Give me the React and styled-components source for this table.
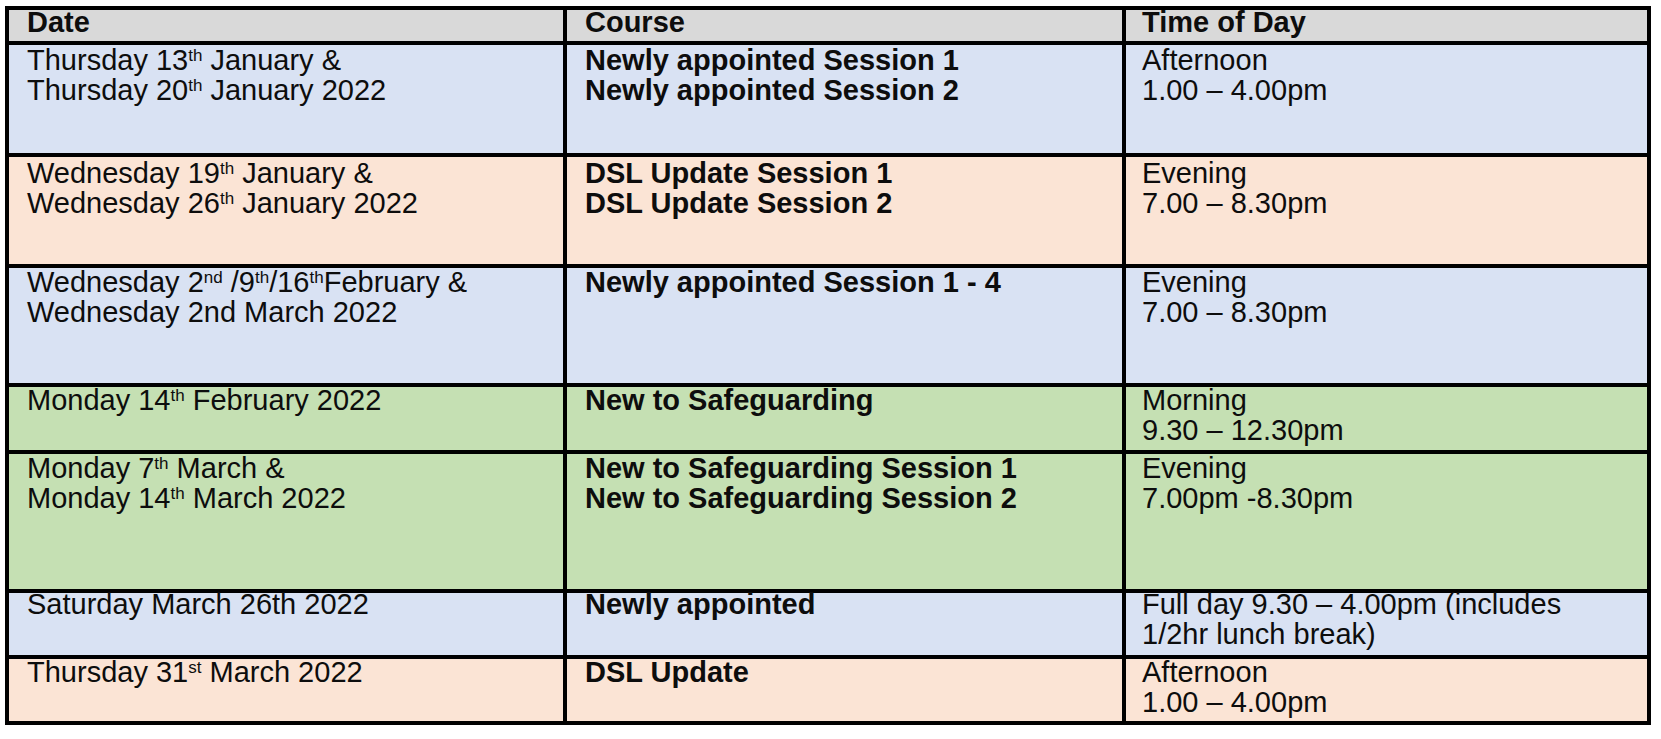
import styled, { createGlobalStyle } from "styled-components"

const GlobalStyle = createGlobalStyle`
  body {
    margin: 0;
    background: #ffffff;
    font-family: "Liberation Sans", Arial, sans-serif;
  }
`

const Page = styled.div`
  padding: 6px 0 0 5px;
`

const Table = styled.div`
  display: inline-grid;
  grid-template-columns: 554px 555px 521px;
  gap: 4px;
  padding: 4px;
  background-color: #000;
`

const Cell = styled.div`
  background-color: ${(p) => p.$bg};
  padding-left: ${(p) => (p.$last ? 16 : 18)}px;
  font-size: 29px;
  line-height: 30px;
  font-weight: ${(p) => (p.$bold ? 700 : 400)};
  color: #0d0d0d;
  white-space: nowrap;
  overflow: visible;

  & > :first-child {
    margin-top: ${(p) => p.$nudge || 0}px;
  }
`

const Line = styled.div``

const Sup = styled.sup`
  font-size: 17px;
  line-height: 0;
  vertical-align: 9px;
`

const colors = {
  header: "#d9d9d9",
  blue: "#d9e2f3",
  peach: "#fbe4d5",
  green: "#c5e0b3",
}

const rows = [
  {
    bg: colors.blue,
    height: 108,
    nudge: 0,
    date: [
      <>Thursday 13<Sup>th</Sup> January &amp;</>,
      <>Thursday 20<Sup>th</Sup> January 2022</>,
    ],
    course: ["Newly appointed Session 1", "Newly appointed Session 2"],
    time: ["Afternoon", "1.00 – 4.00pm"],
  },
  {
    bg: colors.peach,
    height: 107,
    nudge: 1,
    date: [
      <>Wednesday 19<Sup>th</Sup> January &amp;</>,
      <>Wednesday 26<Sup>th</Sup> January 2022</>,
    ],
    course: ["DSL Update Session 1", "DSL Update Session 2"],
    time: ["Evening", "7.00 – 8.30pm"],
  },
  {
    bg: colors.blue,
    height: 115,
    nudge: -1,
    date: [
      <>Wednesday 2<Sup>nd</Sup> /9<Sup>th</Sup>/16<Sup>th</Sup>February &amp;</>,
      <>Wednesday 2nd March 2022</>,
    ],
    course: ["Newly appointed Session 1 - 4"],
    time: ["Evening", "7.00 – 8.30pm"],
  },
  {
    bg: colors.green,
    height: 63,
    nudge: -2,
    date: [<>Monday 14<Sup>th</Sup> February 2022</>],
    course: ["New to Safeguarding"],
    time: ["Morning", "9.30 – 12.30pm"],
  },
  {
    bg: colors.green,
    height: 135,
    nudge: -1,
    date: [
      <>Monday 7<Sup>th</Sup> March &amp;</>,
      <>Monday 14<Sup>th</Sup> March 2022</>,
    ],
    course: ["New to Safeguarding Session 1", "New to Safeguarding Session 2"],
    time: ["Evening", "7.00pm -8.30pm"],
  },
  {
    bg: colors.blue,
    height: 62,
    nudge: -4,
    date: [<>Saturday March 26th 2022</>],
    course: ["Newly appointed"],
    time: ["Full day 9.30 – 4.00pm (includes", "1/2hr lunch break)"],
  },
  {
    bg: colors.peach,
    height: 62,
    nudge: -2,
    date: [<>Thursday 31<Sup>st</Sup> March 2022</>],
    course: ["DSL Update"],
    time: ["Afternoon", "1.00 – 4.00pm"],
  },
]

function Row({ row }) {
  return (
    <>
      <Cell $bg={row.bg} $nudge={row.nudge}>
        {row.date.map((line, i) => (
          <Line key={i}>{line}</Line>
        ))}
      </Cell>
      <Cell $bg={row.bg} $nudge={row.nudge} $bold>
        {row.course.map((line, i) => (
          <Line key={i}>{line}</Line>
        ))}
      </Cell>
      <Cell $bg={row.bg} $nudge={row.nudge} $last>
        {row.time.map((line, i) => (
          <Line key={i}>{line}</Line>
        ))}
      </Cell>
    </>
  )
}

export default function App() {
  const rowHeights = [31, ...rows.map((r) => r.height)].map((h) => h + "px").join(" ")

  return (
    <>
      <GlobalStyle />
      <Page>
        <Table style={{ gridTemplateRows: rowHeights }}>
          <Cell $bg={colors.header} $bold $nudge={-3}><Line>Date</Line></Cell>
          <Cell $bg={colors.header} $bold $nudge={-3}><Line>Course</Line></Cell>
          <Cell $bg={colors.header} $bold $nudge={-3} $last><Line>Time of Day</Line></Cell>

          {rows.map((row, i) => (
            <Row key={i} row={row} />
          ))}
        </Table>
      </Page>
    </>
  )
}
